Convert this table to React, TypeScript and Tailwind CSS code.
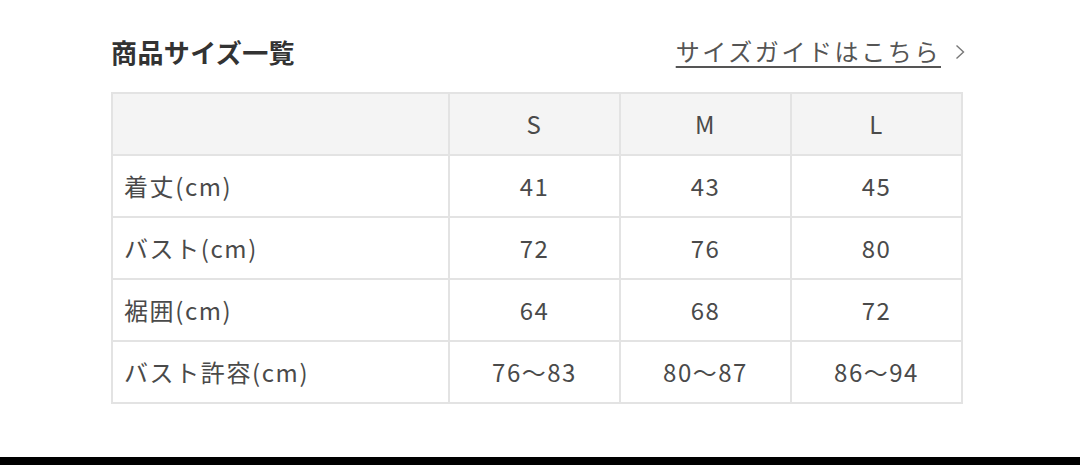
const SIZES = ["S", "M", "L"];

const ROWS = [
  { label: "着丈(cm)", values: ["41", "43", "45"] },
  { label: "バスト(cm)", values: ["72", "76", "80"] },
  { label: "裾囲(cm)", values: ["64", "68", "72"] },
  { label: "バスト許容(cm)", values: ["76〜83", "80〜87", "86〜94"] },
];

export default function App() {
  return (
    <div
      className="h-[465px] w-[1080px] flex flex-col bg-white text-[#4a4a4a]"
      style={{ fontFamily: '"Noto Sans CJK JP", "Noto Sans", sans-serif' }}
    >
      <div className="flex-1 pl-[111px] pt-[33px]">
        <div className="w-[852px]">
          {/* HEADER */}
          <div className="flex items-center justify-between h-[36px]">
            <h2 className="text-[26px] font-bold text-[#333] tracking-[0.4px]">
              商品サイズ一覧
            </h2>
            <a className="flex items-center gap-[14px] text-[24px] text-[#555] tracking-[2.6px] mr-[-2px]">
              <span className="underline underline-offset-[5px] decoration-[1.5px]">
                サイズガイドはこちら
              </span>
              <svg width="10" height="16" viewBox="0 0 10 16" className="mt-[2px]">
                <path d="M1.5 1.5 L8.5 8 L1.5 14.5" fill="none" stroke="#777" strokeWidth="1.4" />
              </svg>
            </a>
          </div>

          {/* TABLE */}
          <table className="mt-[23px] w-full border-collapse text-[24px] tracking-[1.5px]">
            <thead>
              <tr className="bg-[#f4f4f4] h-[62px]">
                <th className="border-2 border-[#e3e3e3] w-[337px]"></th>
                {SIZES.map((s) => (
                  <th key={s} className="border-2 border-[#e3e3e3] font-normal text-center">
                    {s}
                  </th>
                ))}
              </tr>
            </thead>
            <tbody>
              {ROWS.map((row) => (
                <tr key={row.label} className="h-[62px]">
                  <td className="border-2 border-[#e3e3e3] pl-[11px] tracking-[1.6px]">{row.label}</td>
                  {row.values.map((v, i) => (
                    <td key={i} className="border-2 border-[#e3e3e3] text-center w-[171px]">
                      {v}
                    </td>
                  ))}
                </tr>
              ))}
            </tbody>
          </table>
        </div>
      </div>
      <div className="h-[8px] bg-black"></div>
    </div>
  );
}
